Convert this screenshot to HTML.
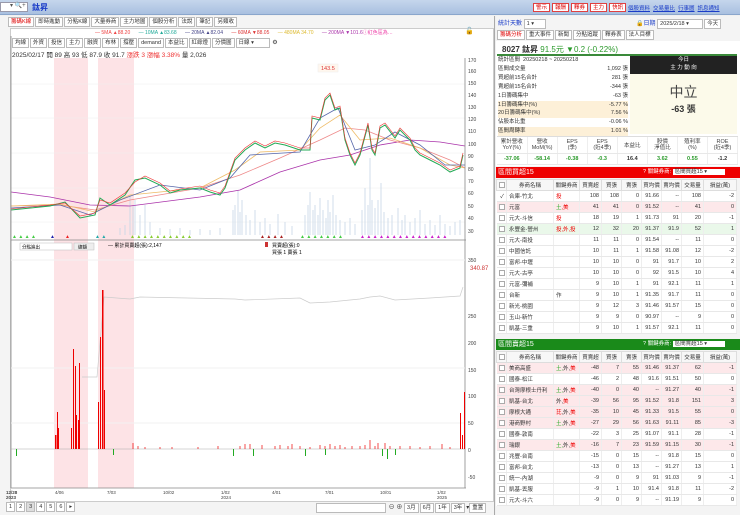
<!DOCTYPE html>
<html><head><meta charset="utf-8">
<style>
*{box-sizing:border-box;margin:0;padding:0}
body{width:740px;height:515px;overflow:hidden;background:#f0f0f0;font-family:"Liberation Sans","Noto Sans CJK TC",sans-serif;font-size:6px;color:#333;position:relative}
.abs{position:absolute}
.top{left:0;top:0;width:740px;height:15px;background:linear-gradient(#c5d6ec,#a9c0e0);border-bottom:1px solid #8aa6cc}
.btn{display:inline-block;border:1px solid #e04040;background:#fff;color:#d00;padding:0 2px;height:9px;line-height:8px;margin-right:2px;font-size:5.5px}
.lk{color:#1a3cc8;text-decoration:underline;margin-right:3px;font-size:5.5px}
.tab{display:inline-block;border:1px solid #bbb;background:#fff;padding:0 2px;height:10px;line-height:9px;margin-right:1px;font-size:5.5px}
table{border-collapse:collapse;width:100%;table-layout:fixed}
td{font-size:5.5px;height:11px;border-bottom:1px solid #e8e8e8;border-right:1px solid #eee;padding:0 2px;text-align:right;white-space:nowrap;overflow:hidden}
td.n{text-align:left}
th{font-size:5.5px;font-weight:normal;height:11px;border:1px solid #ddd;background:#f7f7f7}
.pk{background:#fde8ea}.gr{background:#eaf8ea}
.cb{display:inline-block;width:6px;height:6px;border:1px solid #aaa;background:#fff;vertical-align:middle}
</style></head><body>
<div class="abs top">
 <div class="abs" style="left:0;top:2px;width:28px;height:10px;background:#fff;border:1px solid #99a"></div>
 <div class="abs" style="left:10px;top:2px;font-size:6px;color:#555">▾ 🔍+</div>
 <div class="abs" style="left:32px;top:2px;font-size:8px;font-weight:bold;color:#1a3cc8">鈦昇</div>
 <div class="abs" style="left:533px;top:3px"><span class="btn">警示</span><span class="btn">報酬</span><span class="btn">釋券</span><span class="btn">主力</span><span class="btn">快訊</span></div>
 <div class="abs" style="left:628px;top:4px"><span class="lk">個股資料</span><span class="lk">交易量比</span><span class="lk">行事曆</span><span class="lk">訊息通知</span></div>
</div>
<div class="abs" style="left:0;top:16px;width:495px;height:499px;background:#f4f4f4;border-right:1px solid #aaa"></div>
<div class="abs" style="left:8px;top:17px"><span class="tab" style="color:#d00">籌碼K線</span><span class="tab">即時進動</span><span class="tab">分點K線</span><span class="tab">大量券商</span><span class="tab">主力地圖</span><span class="tab">個股分析</span><span class="tab">法說</span><span class="tab">筆記</span><span class="tab">另類收</span></div>
<div class="abs" style="left:10px;top:28px;width:484px;height:474px;background:#fff;border:1px solid #ccc"></div>
<div class="abs" style="left:95px;top:29px;font-size:5px;white-space:nowrap"><span style="color:#e44">— 5MA ▲88.20</span>&nbsp;&nbsp;&nbsp;&nbsp;&nbsp;&nbsp;<span style="color:#2a9">— 10MA ▲83.68</span>&nbsp;&nbsp;&nbsp;&nbsp;&nbsp;&nbsp;<span style="color:#448">— 20MA ▲82.04</span>&nbsp;&nbsp;&nbsp;&nbsp;&nbsp;&nbsp;<span style="color:#d33">— 60MA ▼88.05</span>&nbsp;&nbsp;&nbsp;&nbsp;&nbsp;&nbsp;<span style="color:#db3">— 480MA 34.70</span>&nbsp;&nbsp;&nbsp;&nbsp;&nbsp;&nbsp;<span style="color:#a3a">— 200MA ▼101.6</span><span style="color:#e4a">ⓘ紅色區為…</span></div>
<div class="abs" style="left:465px;top:27px;font-size:7px">🔓</div>
<div class="abs" style="left:12px;top:38px;white-space:nowrap"><span class="tab">均線</span><span class="tab">外資</span><span class="tab">投信</span><span class="tab">主力</span><span class="tab">融資</span><span class="tab">布林</span><span class="tab">撐壓</span><span class="tab">demand</span><span class="tab">本益比</span><span class="tab">紅綠燈</span><span class="tab">分價圖</span><span class="tab" style="width:34px">日線 ▾</span> ⚙</div>
<div class="abs" style="left:12px;top:49px;font-size:6.5px;white-space:nowrap">2025/02/17 開 89 高 93 低 87.9 收 91.7 <span style="color:#e33">漲跌 3 漲幅 3.38%</span> 量 2,026</div>
<svg class="abs" style="left:0;top:0" width="495" height="515">
 <rect x="54" y="58" width="34" height="430" fill="#fde3e6"/>
 <rect x="98" y="58" width="36" height="430" fill="#fde3e6"/>
 <g stroke="#eee" stroke-width="0.5">
  <line x1="11" x2="465" y1="84" y2="84"/><line x1="11" x2="465" y1="118" y2="118"/><line x1="11" x2="465" y1="153" y2="153"/><line x1="11" x2="465" y1="188" y2="188"/><line x1="11" x2="465" y1="222" y2="222"/>
 </g>
 <g stroke="#c5d5e6" stroke-width=".8">
  <path d="M130 235V195M133 235V205M135 235V200M140 235V215M145 235V205M150 235V222M125 235V225M120 235V228"/>
  <path d="M233 235V210M235 235V205M238 235V190M240 235V212M242 235V200M246 235V215M250 235V220M255 235V210M260 235V222M265 235V218M270 235V224M278 235V214M285 235V222M292 235V226"/>
  <path d="M305 235V215M308 235V205M310 235V192M313 235V210M315 235V205M318 235V215M320 235V198M323 235V210M326 235V218M328 235V200M330 235V212M333 235V195M336 235V215M340 235V220M345 235V222M350 235V218M355 235V224"/>
  <path d="M362 235V210M365 235V188M368 235V205M370 235V158M372 235V200M375 235V208M378 235V200M381 235V183M384 235V212M388 235V218M392 235V215M398 235V208M402 235V220M405 235V215M410 235V222M415 235V218M420 235V210M425 235V224M430 235V220M435 235V225M440 235V215M445 235V224M450 235V226M455 235V222M460 235V220"/>
  <path d="M160 235V228M170 235V229M180 235V228M190 235V230M200 235V229M210 235V230M220 235V228"/>
 </g>
 <polyline fill="none" stroke="#a3a" stroke-width=".8" points="11,192 50,197 90,205 130,206 200,197 240,190 280,172 320,160 350,155 380,145 410,140 440,142 465,146"/>
 <polyline fill="none" stroke="#e88" stroke-width=".8" points="11,206 60,205 95,210 130,200 200,188 240,175 280,158 320,140 345,128 365,130 390,140 420,148 450,160 465,168"/>
 <polyline fill="none" stroke="#eb6" stroke-width=".8" points="11,206 60,204 95,212 130,195 200,188 235,170 260,152 300,150 320,128 340,115 360,140 390,138 420,148 450,165 465,168"/>
 <polyline fill="none" stroke="#56a" stroke-width=".8" points="11,208 60,205 90,215 120,200 160,185 200,190 230,178 250,155 300,152 320,118 338,108 355,150 375,145 395,132 420,145 445,165 465,165"/>
 <polyline fill="none" stroke="#2a5" stroke-width="1" points="11,210 50,206 65,202 80,218 95,215 100,198 110,205 125,195 135,180 145,178 160,185 170,193 180,190 200,188 210,192 220,195 225,188 235,160 245,150 255,143 265,148 275,143 285,145 300,150 310,150 312,118 320,120 325,100 330,95 335,110 340,108 345,140 350,155 355,165 360,155 368,125 372,150 375,155 380,128 385,125 395,138 400,130 410,140 415,150 420,155 430,160 440,165 450,172 460,168 463,155"/>
 <polyline fill="none" stroke="#e33" stroke-width=".6" points="11,209 50,205 65,203 80,216 95,213 100,200 110,203 125,193 135,182 145,176 160,183 170,191 180,189 200,186 210,190 220,193 225,186 235,158 245,148 255,141 265,146 275,141 285,143 300,148 310,148 312,116 320,118 325,98 330,93 335,108 340,106 345,138 350,153 355,163 360,153 368,123 372,148 375,153 380,126 385,123 395,136 400,128 410,138 415,148 420,153 430,158 440,163 450,170 460,166 463,153"/>
 <rect x="318" y="64" width="20" height="8" fill="#fff7ee" stroke="#eee" stroke-width=".5"/><text x="321" y="70" font-size="5.5" fill="#d33">143.5</text>
 <g font-size="5"><text x="12" y="238" fill="#4c4">▲ ▲ ▲ ▲</text><text x="50" y="238" fill="#22a">▲</text><text x="65" y="238" fill="#e22">▲</text><text x="95" y="238" fill="#2aa">▲ ▲</text><text x="130" y="238" fill="#8c3">▲ ▲ ▲ ▲ ▲ ▲ ▲ ▲ ▲ ▲</text><text x="260" y="238" fill="#a22">▲ ▲ ▲ ▲</text><text x="300" y="238" fill="#4c4">▲ ▲ ▲ ▲ ▲ ▲ ▲</text><text x="360" y="238" fill="#c2c">▲ ▲ ▲ ▲ ▲ ▲ ▲ ▲ ▲ ▲ ▲ ▲ ▲ ▲</text></g>
 <line x1="11" y1="240" x2="466" y2="240" stroke="#888" stroke-width=".8"/>
 <line x1="465" y1="58" x2="465" y2="488" stroke="#888" stroke-width=".8"/>
 <line x1="11" y1="488" x2="466" y2="488" stroke="#888" stroke-width=".8"/>
 <line x1="11" y1="36" x2="11" y2="488" stroke="#888" stroke-width=".8"/>
 <g font-size="5" fill="#444"><text x="468" y="62">170</text><text x="468" y="73">160</text><text x="468" y="85">150</text><text x="468" y="97">140</text><text x="468" y="109">130</text><text x="468" y="121">120</text><text x="468" y="133">110</text><text x="468" y="146">100</text><text x="468" y="158">90</text><text x="468" y="171">80</text><text x="468" y="183">70</text><text x="468" y="195">60</text><text x="468" y="208">50</text><text x="468" y="220">40</text><text x="468" y="233">30</text>
 <text x="468" y="262">350</text><text x="468" y="318">250</text><text x="468" y="345">200</text><text x="468" y="372">150</text><text x="468" y="398">100</text><text x="468" y="425">50</text><text x="468" y="452">0</text><text x="468" y="479">-50</text></g>
 <text x="470" y="270" font-size="6" fill="#c33">340.87</text>
 <rect x="20" y="243" width="52" height="7" fill="#fff" stroke="#bbb" stroke-width=".5"/><text x="22" y="248.5" font-size="4.5">分點進出</text>
 <rect x="74" y="243" width="20" height="7" fill="#eee" stroke="#bbb" stroke-width=".5"/><text x="78" y="248.5" font-size="4.5">總額</text>
 <text x="108" y="247" font-size="5">— 累計買賣超(張):2,147</text>
 <rect x="265" y="242" width="3" height="5" fill="#c33"/><text x="272" y="247" font-size="5">買賣超(張):0</text><text x="272" y="254" font-size="5">買張 1 賣張 1</text>
 <line x1="11" y1="260" x2="465" y2="260" stroke="#f2f2f2"/><line x1="11" y1="368" x2="465" y2="368" stroke="#f2f2f2"/><line x1="11" y1="423" x2="465" y2="423" stroke="#f2f2f2"/>
 <polyline fill="none" stroke="#ccc" stroke-width=".7" points="82,377 97,377 104,297 130,299 140,297 235,299 245,300 300,298 310,303 330,302 360,299 370,297 380,296 395,300 430,298 460,296 463,287"/>
 <line x1="11" y1="449" x2="465" y2="449" stroke="#aaa" stroke-width=".5"/>
 <g fill="#e00">
  <rect x="55" y="435" width="1.5" height="14"/><rect x="57" y="412" width="1" height="37"/><rect x="58" y="428" width="1" height="21"/>
  <rect x="71" y="428" width="1" height="21"/><rect x="73" y="349" width="1" height="100"/><rect x="75" y="366" width="1" height="83"/><rect x="76" y="415" width="1" height="34"/><rect x="78" y="420" width="1.5" height="29"/><rect x="79" y="363" width="1" height="86"/>
  <rect x="98" y="402" width="1" height="47"/><rect x="100" y="337" width="1" height="112"/><rect x="102" y="290" width="1.5" height="159"/><rect x="104" y="390" width="1" height="59"/>
  <rect x="460" y="413" width="1" height="36"/><rect x="462" y="435" width="1" height="14"/><rect x="464" y="392" width="1" height="57"/>
 </g>
 <g stroke="#e00" stroke-width=".7">
  <path d="M133 449V443M138 449V446M145 449V447M160 449V447M172 449V447M198 449V447M218 449V446M240 449V446M245 449V444M250 449V444M262 449V445M275 449V446M280 449V445M288 449V446M292 449V444M300 449V446M310 449V447M320 449V445M325 449V446M330 449V444M335 449V446M340 449V445M345 449V447M352 449V446M360 449V446M365 449V445M370 449V440M375 449V446M378 449V443M385 449V443M390 449V446M400 449V446M410 449V446M420 449V447M430 449V446M442 449V444M450 449V447"/>
 </g>
 <g fill="#2a2"><rect x="16" y="449" width="1" height="7"/><rect x="113" y="449" width="1" height="6"/><rect x="233" y="449" width="1" height="7"/><rect x="253" y="449" width="1" height="7"/><rect x="305" y="449" width="1" height="7"/><rect x="325" y="449" width="1" height="6"/><rect x="382" y="449" width="1" height="7"/><rect x="387" y="449" width="1" height="10"/><rect x="395" y="449" width="1" height="6"/></g>
 <g font-size="4.5" fill="#444"><text x="6" y="494" font-weight="bold">12/28</text><text x="6" y="499" font-weight="bold">2023</text><text x="55" y="494">4/06</text><text x="107" y="494">7/03</text><text x="163" y="494">10/02</text><text x="221" y="494">1/02</text><text x="221" y="499">2024</text><text x="272" y="494">4/01</text><text x="325" y="494">7/01</text><text x="380" y="494">10/01</text><text x="437" y="494">1/02</text><text x="437" y="499">2025</text></g>
</svg>
<div class="abs" style="left:6px;top:502px;white-space:nowrap"><span class="tab">1</span><span class="tab">2</span><span class="tab" style="background:#ddd">3</span><span class="tab">4</span><span class="tab">5</span><span class="tab">6</span><span class="tab">▸</span></div>
<div class="abs" style="left:316px;top:502px;white-space:nowrap"><span class="tab" style="width:70px">&nbsp;</span> ⊖ ⊕ <span class="tab">3月</span><span class="tab">6月</span><span class="tab">1年</span><span class="tab">3年</span>▾<span class="tab">重置</span></div>
<div class="abs" style="left:496px;top:16px;width:244px;height:499px;background:#f4f4f4"></div>
<div class="abs" style="left:498px;top:18px;font-size:6px;color:#1a3cc8">統計天數 <span class="tab" style="width:22px;color:#333">1 ▾</span></div>
<div class="abs" style="left:636px;top:18px;font-size:6px;color:#1a3cc8">🔒日期 <span class="tab" style="width:46px;color:#333">2025/2/18 ▾</span><span class="tab" style="color:#333">今天</span></div>
<div class="abs" style="left:497px;top:30px"><span class="tab" style="color:#d00">籌碼分析</span><span class="tab">重大事件</span><span class="tab">新聞</span><span class="tab">分點追蹤</span><span class="tab">釋券表</span><span class="tab">法人目標</span></div>
<div class="abs" style="left:496px;top:41px;width:244px;height:125px;background:#fff"></div>
<div class="abs" style="left:502px;top:44px;font-size:8px;font-weight:bold;white-space:nowrap">8027 鈦昇 <span style="color:#2a9a2a;font-weight:normal">91.5元 ▼0.2 (-0.22%)</span></div>
<div class="abs" style="left:497px;top:54px;width:240px;height:2px;background:#3a8a3a"></div>
<div class="abs" style="left:630px;top:56px;width:107px;height:18px;background:#222;color:#fff;text-align:center;font-size:5.5px;line-height:8px">今日<br>主 力 動 向</div>
<div class="abs" style="left:630px;top:74px;width:107px;height:60px;background:#fcfaea;text-align:center"><div style="font-size:14px;margin-top:8px;color:#444">中立</div><div style="font-size:9px;font-weight:bold">-63 張</div></div>
<div class="abs" style="left:498px;top:56px;width:130px;font-size:5.5px;line-height:8.9px">
<div>統計區間 &nbsp;20250218 ~ 20250218</div>
<div>區間成交量<span style="float:right">1,092 張</span></div>
<div>買超前15名合計<span style="float:right">281 張</span></div>
<div>賣超前15名合計<span style="float:right">-344 張</span></div>
<div>1日籌碼集中<span style="float:right">-63 張</span></div>
<div style="background:#fdf0d8">1日籌碼集中(%)<span style="float:right">-5.77 %</span></div>
<div style="background:#fdf0d8">20日籌碼集中(%)<span style="float:right">7.56 %</span></div>
<div>佔股本比重<span style="float:right">-0.06 %</span></div>
<div style="background:#fdf0d8">區間周轉率<span style="float:right">1.01 %</span></div>
</div>
<div class="abs" style="left:497px;top:136px;width:241px;height:29px;background:#fff;border-top:1px solid #ddd">
<table><tr style="color:#444"><td style="text-align:center;height:16px;line-height:6px">累計營收<br>YoY(%)</td><td style="text-align:center;line-height:6px">營收<br>MoM(%)</td><td style="text-align:center;line-height:6px">EPS<br>(季)</td><td style="text-align:center;line-height:6px">EPS<br>(近4季)</td><td style="text-align:center">本益比</td><td style="text-align:center;line-height:6px">股價<br>淨值比</td><td style="text-align:center;line-height:6px">殖利率<br>(%)</td><td style="text-align:center;line-height:6px">ROE<br>(近4季)</td></tr>
<tr style="font-weight:bold;font-size:6px"><td style="text-align:center;color:#2a9a2a">-37.06</td><td style="text-align:center;color:#2a9a2a">-58.14</td><td style="text-align:center;color:#2a9a2a">-0.38</td><td style="text-align:center;color:#2a9a2a">-0.3</td><td style="text-align:center">16.4</td><td style="text-align:center;color:#2a9a2a">3.62</td><td style="text-align:center;color:#2a9a2a">0.55</td><td style="text-align:center">-1.2</td></tr></table></div>
<div class="abs" style="left:496px;top:167px;width:244px;height:11px;background:#e00;color:#fff;font-size:7px;padding-left:2px;line-height:11px">區間買超15<span style="position:absolute;left:147px;font-size:5.5px">? 關鍵券商: <span style="background:#fff;color:#333;padding:0 18px 0 2px">區間買超15 ▾</span></span></div>
<div class="abs" style="left:496px;top:179px;width:240px;background:#fff">
<table><colgroup><col style="width:10px"><col style="width:47px"><col style="width:26px"><col style="width:22px"><col style="width:20px"><col style="width:20px"><col style="width:20px"><col style="width:20px"><col style="width:22px"><col style="width:33px"></colgroup>
<tr><th><span class="cb"></span></th><th>券商名稱</th><th>關鍵券商</th><th>買賣超</th><th>買張</th><th>賣張</th><th>買均價</th><th>賣均價</th><th>交易量</th><th>損益(萬)</th></tr>
<tr><td>✓</td><td class="n">合庫-竹北</td><td class="n" style="color:#e00">投</td><td>108</td><td>108</td><td>0</td><td>91.66</td><td>--</td><td>108</td><td>-2</td></tr>
<tr class="pk"><td><span class="cb"></span></td><td class="n">元富</td><td class="n"><span style="color:#2a2">土</span><span style="color:#e00">,美</span></td><td>41</td><td>41</td><td>0</td><td>91.52</td><td>--</td><td>41</td><td>0</td></tr>
<tr><td><span class="cb"></span></td><td class="n">元大-斗信</td><td class="n" style="color:#e00">投</td><td>18</td><td>19</td><td>1</td><td>91.73</td><td>91</td><td>20</td><td>-1</td></tr>
<tr class="gr"><td><span class="cb"></span></td><td class="n">永豐金-營州</td><td class="n" style="color:#e00">投,外,投</td><td>12</td><td>32</td><td>20</td><td>91.37</td><td>91.9</td><td>52</td><td>1</td></tr>
<tr><td><span class="cb"></span></td><td class="n">元大-南投</td><td></td><td>11</td><td>11</td><td>0</td><td>91.54</td><td>--</td><td>11</td><td>0</td></tr>
<tr><td><span class="cb"></span></td><td class="n">中國信託</td><td></td><td>10</td><td>11</td><td>1</td><td>91.58</td><td>91.08</td><td>12</td><td>-2</td></tr>
<tr><td><span class="cb"></span></td><td class="n">富邦-中壢</td><td></td><td>10</td><td>10</td><td>0</td><td>91</td><td>91.7</td><td>10</td><td>2</td></tr>
<tr><td><span class="cb"></span></td><td class="n">元大-古亭</td><td></td><td>10</td><td>10</td><td>0</td><td>92</td><td>91.5</td><td>10</td><td>4</td></tr>
<tr><td><span class="cb"></span></td><td class="n">元富-彌補</td><td></td><td>9</td><td>10</td><td>1</td><td>91</td><td>92.1</td><td>11</td><td>1</td></tr>
<tr><td><span class="cb"></span></td><td class="n">台新</td><td class="n">作</td><td>9</td><td>10</td><td>1</td><td>91.35</td><td>91.7</td><td>11</td><td>0</td></tr>
<tr><td><span class="cb"></span></td><td class="n">新光-桃園</td><td></td><td>9</td><td>12</td><td>3</td><td>91.46</td><td>91.57</td><td>15</td><td>0</td></tr>
<tr><td><span class="cb"></span></td><td class="n">玉山-新竹</td><td></td><td>9</td><td>9</td><td>0</td><td>90.97</td><td>--</td><td>9</td><td>0</td></tr>
<tr><td><span class="cb"></span></td><td class="n">凱基-三重</td><td></td><td>9</td><td>10</td><td>1</td><td>91.57</td><td>92.1</td><td>11</td><td>0</td></tr>
</table></div>
<div class="abs" style="left:496px;top:339px;width:244px;height:11px;background:#1a8a1a;color:#fff;font-size:7px;padding-left:2px;line-height:11px">區間賣超15<span style="position:absolute;left:147px;font-size:5.5px">? 關鍵券商: <span style="background:#fff;color:#333;padding:0 18px 0 2px">區間賣超15 ▾</span></span></div>
<div class="abs" style="left:496px;top:351px;width:240px;background:#fff">
<table><colgroup><col style="width:10px"><col style="width:47px"><col style="width:26px"><col style="width:22px"><col style="width:20px"><col style="width:20px"><col style="width:20px"><col style="width:20px"><col style="width:22px"><col style="width:33px"></colgroup>
<tr><th><span class="cb"></span></th><th>券商名稱</th><th>關鍵券商</th><th>買賣超</th><th>買張</th><th>賣張</th><th>買均價</th><th>賣均價</th><th>交易量</th><th>損益(萬)</th></tr>
<tr class="pk"><td><span class="cb"></span></td><td class="n">美商高盛</td><td class="n"><span style="color:#2a2">土,</span>外,<span style="color:#e00">美</span></td><td>-48</td><td>7</td><td>55</td><td>91.46</td><td>91.37</td><td>62</td><td>-1</td></tr>
<tr><td><span class="cb"></span></td><td class="n">國泰-松江</td><td></td><td>-46</td><td>2</td><td>48</td><td>91.6</td><td>91.51</td><td>50</td><td>0</td></tr>
<tr class="pk"><td><span class="cb"></span></td><td class="n">台灣摩根士丹利</td><td class="n"><span style="color:#2a2">土,</span>外,<span style="color:#e00">美</span></td><td>-40</td><td>0</td><td>40</td><td>--</td><td>91.27</td><td>40</td><td>-1</td></tr>
<tr class="pk"><td><span class="cb"></span></td><td class="n">凱基-台北</td><td class="n">外,<span style="color:#e00">美</span></td><td>-39</td><td>56</td><td>95</td><td>91.52</td><td>91.8</td><td>151</td><td>3</td></tr>
<tr class="pk"><td><span class="cb"></span></td><td class="n">摩根大通</td><td class="n"><span style="color:#e00">芘</span>,外,<span style="color:#e00">美</span></td><td>-35</td><td>10</td><td>45</td><td>91.33</td><td>91.5</td><td>55</td><td>0</td></tr>
<tr class="pk"><td><span class="cb"></span></td><td class="n">港商野村</td><td class="n"><span style="color:#2a2">土,</span>外,<span style="color:#e00">美</span></td><td>-27</td><td>29</td><td>56</td><td>91.63</td><td>91.11</td><td>85</td><td>-3</td></tr>
<tr><td><span class="cb"></span></td><td class="n">國泰-敦南</td><td></td><td>-22</td><td>3</td><td>25</td><td>91.07</td><td>91.1</td><td>28</td><td>-1</td></tr>
<tr class="pk"><td><span class="cb"></span></td><td class="n">瑞銀</td><td class="n"><span style="color:#2a2">土,</span>外,<span style="color:#e00">美</span></td><td>-16</td><td>7</td><td>23</td><td>91.59</td><td>91.15</td><td>30</td><td>-1</td></tr>
<tr><td><span class="cb"></span></td><td class="n">兆豐-台南</td><td></td><td>-15</td><td>0</td><td>15</td><td>--</td><td>91.8</td><td>15</td><td>0</td></tr>
<tr><td><span class="cb"></span></td><td class="n">富邦-台北</td><td></td><td>-13</td><td>0</td><td>13</td><td>--</td><td>91.27</td><td>13</td><td>1</td></tr>
<tr><td><span class="cb"></span></td><td class="n">統一-內湖</td><td></td><td>-9</td><td>0</td><td>9</td><td>91</td><td>91.03</td><td>9</td><td>-1</td></tr>
<tr><td><span class="cb"></span></td><td class="n">凱基-丟服</td><td></td><td>-9</td><td>1</td><td>10</td><td>91.4</td><td>91.8</td><td>11</td><td>-2</td></tr>
<tr><td><span class="cb"></span></td><td class="n">元大-斗六</td><td></td><td>-9</td><td>0</td><td>9</td><td>--</td><td>91.19</td><td>9</td><td>0</td></tr>
</table></div>
</body></html>
